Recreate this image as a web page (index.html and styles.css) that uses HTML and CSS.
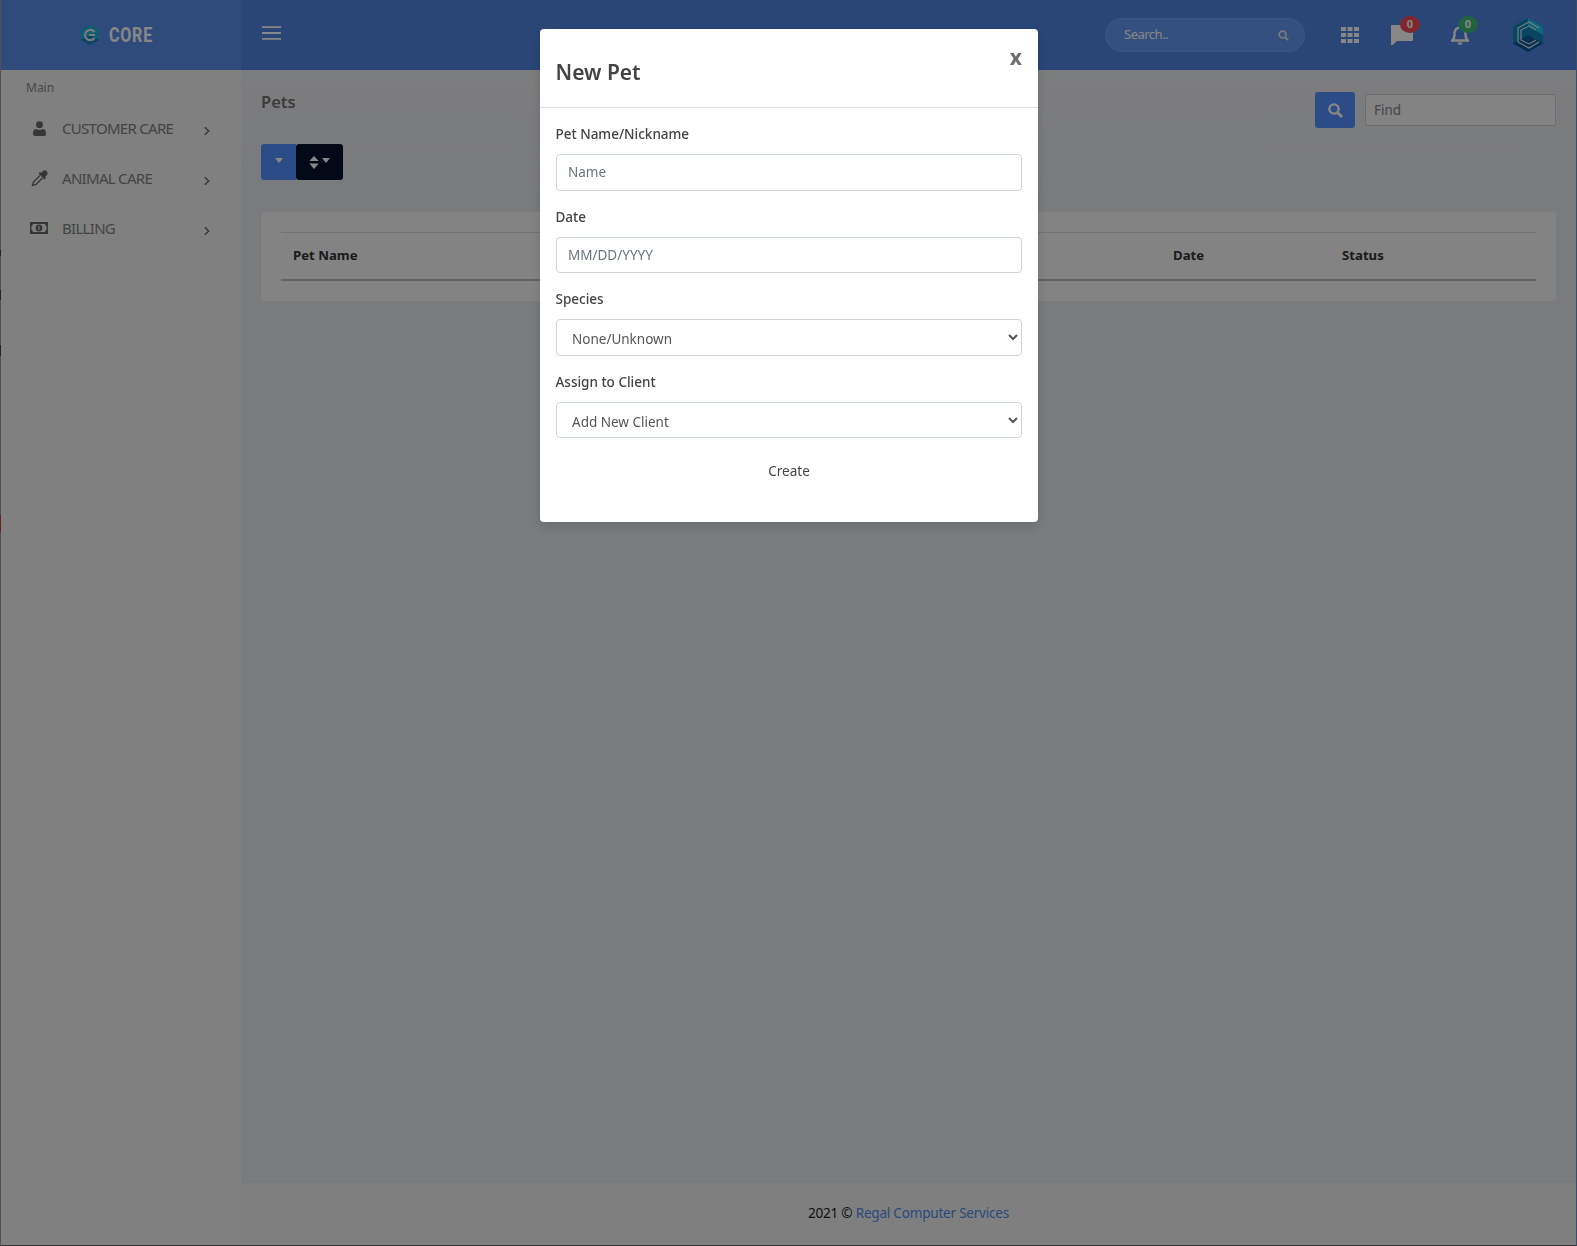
FILE: index.html
```html
<!DOCTYPE html>
<html lang="en">
<head>
  <meta charset="UTF-8" />
  <meta name="viewport" content="width=device-width, initial-scale=1.0" />
  <title>Pets - Core</title>
  <link rel="stylesheet" href="styles.css">
</head>
<body>
  <div class="app">
    <!-- top bar -->
    <header class="topbar">
      <div class="brand">
        <svg class="brand-logo" viewBox="0 0 20 22" width="20" height="22">
          <polygon points="10,1 19,6 19,16 10,21 1,16 1,6" fill="#1fb0d8" />
          <polygon points="10,11 19,16 10,21 1,16" fill="#1a7fb8" />
          <path d="M14.500 8 A5.200 5.200 0 1 0 14.500 14 M9 11 H15" fill="none" stroke="#dfe9f5" stroke-width="2.200" />
        </svg>
        <span class="brand-name">CORE</span>
      </div>
      <div class="topbar-main">
        <svg class="menu-toggle" viewBox="0 0 19 14" width="19" height="14">
          <path d="M0 1.200 H19 M0 7 H19 M0 12.800 H19" stroke="#fff" stroke-width="1.800" />
        </svg>
        <div class="top-search">
          <span class="top-search-text">Search..</span>
          <svg viewBox="0 0 12 12" width="11" height="11">
            <circle cx="5" cy="5" r="3.700" fill="none" stroke="#e6e6e6" stroke-width="1.800" />
            <path d="M8 8 L11 11" stroke="#e6e6e6" stroke-width="2" />
          </svg>
        </div>
        <div class="top-icons">
          <svg class="ico-grid" viewBox="0 0 18 16" width="18" height="16">
            <path fill="#fff" d="M0 0h5v4H0zM6.500 0h5v4h-5zM13 0h5v4h-5zM0 6h5v4H0zM6.500 6h5v4h-5zM13 6h5v4h-5zM0 12h5v4H0zM6.500 12h5v4h-5zM13 12h5v4h-5z" />
          </svg>
          <div class="top-icon msg">
            <svg viewBox="0 0 22 20" width="22" height="20">
              <path fill="#fff" d="M1 0H21a1 1 0 0 1 1 1V15a1 1 0 0 1-1 1H6L1 20.500Q0 20 0 19V1a1 1 0 0 1 1-1z" />
            </svg>
            <span class="badge badge-red">0</span>
          </div>
          <div class="top-icon bell">
            <svg viewBox="0 0 18 20" width="18" height="20">
              <path fill="none" stroke="#fff" stroke-width="2.400" d="M1.200 15.500 C4 13 3.500 10 3.500 8 A5.500 5.500 0 0 1 14.500 8 C14.500 10 14 13 16.800 15.500 Z" />
              <path fill="#fff" d="M6.500 17.500h5a2.500 2.500 0 0 1-5 0z" />
            </svg>
            <span class="badge badge-green">0</span>
          </div>
          <svg class="avatar" viewBox="0 0 32 36" width="32" height="36">
            <polygon points="16,1 31,9.500 31,26.500 16,35 1,26.500 1,9.500" fill="#1187b8" />
            <polygon points="16,1 31,9.500 31,18 16,9" fill="#1bc0e6" />
            <polygon points="16,35 31,26.500 16,18 1,26.500" fill="#0c5a9c" />
            <path d="M27 11 L17 5 L6 11 V25 L17 31 L27 25 M24 13 L17 9 L9 13 V23 L17 27 L24 23" fill="none" stroke="#e6eef6" stroke-width="1.100" />
          </svg>
        </div>
      </div>
    </header>

    <div class="layout">
      <!-- left menu -->
      <nav class="sidebar">
        <div class="side-title">Main</div>
        <a class="side-item">
          <span class="side-icon">
            <svg viewBox="0 0 14 16" width="13" height="15">
              <circle cx="7" cy="4" r="3.700" fill="#666" />
              <path fill="#666" d="M3 8.500 Q7 10.500 11 8.500 Q14 9.500 14 13 V14 Q14 16 12 16 H2 Q0 16 0 14 V13 Q0 9.500 3 8.500z" />
            </svg>
          </span>
          <span class="side-label">CUSTOMER CARE</span>
          <svg class="side-arrow" viewBox="0 0 7 11" width="6" height="10"><path d="M1 1 L5.500 5.500 L1 10" fill="none" stroke="#666" stroke-width="1.600" /></svg>
        </a>
        <a class="side-item">
          <span class="side-icon">
            <svg viewBox="0 0 17 17" width="17" height="17">
              <path fill="#666" d="M10 3 L12 1 Q14 -.5 15.500 1 Q17.500 3 16 5 L14 7 L15 8 L13.500 9.500 L7.500 3.500 L9 2z" />
              <path fill="none" stroke="#666" stroke-width="1.400" d="M9 5.500 L2.500 12 L1.500 15.500 L5 14.500 L11.500 8" />
            </svg>
          </span>
          <span class="side-label">ANIMAL CARE</span>
          <svg class="side-arrow" viewBox="0 0 7 11" width="6" height="10"><path d="M1 1 L5.500 5.500 L1 10" fill="none" stroke="#666" stroke-width="1.600" /></svg>
        </a>
        <a class="side-item">
          <span class="side-icon">
            <svg viewBox="0 0 18 12" width="18" height="12">
              <path fill="#666" fill-rule="evenodd" d="M0 0H18V12H0z M3 2 Q3 4 1.500 4 V8 Q3 8 3 10 H15 Q15 8 16.500 8 V4 Q15 4 15 2z" />
              <circle cx="9" cy="6" r="3.400" fill="#666" />
              <path d="M9 4 V8" stroke="#ddd" stroke-width="1.200" />
            </svg>
          </span>
          <span class="side-label">BILLING</span>
          <svg class="side-arrow" viewBox="0 0 7 11" width="6" height="10"><path d="M1 1 L5.500 5.500 L1 10" fill="none" stroke="#666" stroke-width="1.600" /></svg>
        </a>
      </nav>

      <main class="content">
        <div class="page-body">
          <div class="page-head">
            <div>
              <h1 class="page-title">Pets</h1>
              <div class="tool-group">
                <button class="tool-btn tool-blue"><span class="caret"></span></button>
                <button class="tool-btn tool-dark">
                  <svg viewBox="0 0 10 14" width="10" height="13"><path fill="#fff" d="M5 0 L10 5.500 H0z M5 14 L0 8 H10z" /></svg>
                  <span class="caret"></span>
                </button>
              </div>
            </div>
            <div class="find">
              <button class="find-btn">
                <svg viewBox="0 0 15 15" width="15" height="15">
                  <circle cx="6" cy="6" r="4.600" fill="none" stroke="#fff" stroke-width="2.400" />
                  <path d="M9.500 9.500 L14 14" stroke="#fff" stroke-width="2.800" />
                </svg>
              </button>
              <input class="find-input" type="text" placeholder="Find" />
            </div>
          </div>

          <section class="card">
            <div class="pets-table">
              <span class="col-name">Pet Name</span>
              <span class="col-date">Date</span>
              <span class="col-status">Status</span>
            </div>
          </section>
        </div>

        <footer class="footer">2021 © <a class="footer-link">Regal Computer Services</a></footer>
      </main>
    </div>
  </div>

  <!-- modal -->
  <div class="backdrop">
    <form class="modal">
      <div class="modal-head">
        <h2>New Pet</h2>
        <span class="modal-close">x</span>
      </div>
      <div class="modal-body">
        <label for="pet-name">Pet Name/Nickname</label>
        <input id="pet-name" class="tall" type="text" placeholder="Name" />

        <label for="pet-date">Date</label>
        <input id="pet-date" type="text" placeholder="MM/DD/YYYY" />

        <label for="pet-species">Species</label>
        <select id="pet-species" class="tall">
          <option>None/Unknown</option>
        </select>

        <label for="pet-client">Assign to Client</label>
        <select id="pet-client">
          <option>Add New Client</option>
        </select>

        <button type="button" class="create-btn">Create</button>
      </div>
    </form>
  </div>
</body>
</html>
```

FILE: styles.css
```css
html, body {
  height: 100%;
}

body {
  margin: 0;
  font-family: "Noto Sans", "Open Sans", sans-serif;
  font-size: 14px;
  color: #333;
  /* the 1px edge of the window behind, on the left */
  background: linear-gradient(#999 0, #999 250px, #444 250px, #444 256px, #999 256px, #999 290px, #444 290px, #444 300px, #999 300px, #999 345px, #444 345px, #444 356px, #999 356px, #999 515px, #b8483e 515px, #b8483e 532px, #999 532px);
  overflow: hidden;
}

.app {
  height: 100vh;
  box-sizing: border-box;
  margin-left: 1px;
  display: flex;
  flex-direction: column;
  border-right: 1px solid #6f90c8;
  border-bottom: 1px solid #666;
}

/* top bar */
.topbar {
  height: 70px;
  flex: none;
  display: flex;
  background-color: #4f84e1;
}

.brand {
  width: 240px;
  flex: none;
  display: flex;
  align-items: center;
  justify-content: center;
  gap: 9px;
  padding: 0 10px 1px 0;
  box-sizing: border-box;
  background-color: #598eea;
}

.brand-name {
  font-family: "Roboto", sans-serif;
  font-weight: 700;
  font-size: 20px;
  letter-spacing: 1px;
  color: #fff;
  transform: scaleX(.8);
  transform-origin: left center;
  width: 44px;
}

.topbar-main {
  flex: 1;
  display: flex;
  align-items: center;
  padding-left: 21px;
}

.menu-toggle {
  margin-top: -4px;
}

.top-search {
  margin-left: auto;
  width: 200px;
  height: 34px;
  box-sizing: border-box;
  display: flex;
  align-items: center;
  justify-content: space-between;
  padding: 0 15px 2px 18px;
  background-color: #6097f0;
  border: 1px solid #6ea3f8;
  border-radius: 17px;
}

.top-search svg {
  margin-top: 2px;
}

.top-search-text {
  color: #fff;
  font-size: 13px;
  letter-spacing: -.5px;
}

.top-icons {
  display: flex;
  align-items: center;
  margin-left: 36px;
  margin-right: 32px;
}

.top-icon {
  position: relative;
  display: flex;
}

.msg {
  margin-left: 32px;
}

.bell {
  margin-left: 38px;
}

.avatar {
  margin-left: 43px;
}

.badge {
  position: absolute;
  top: -9px;
  width: 20px;
  height: 17px;
  border-radius: 50%;
  font-size: 11px;
  font-weight: 700;
  line-height: 16px;
  text-align: center;
  color: #fff;
}

.badge-red {
  background-color: #f04a55;
  left: 9px;
}

.badge-green {
  background-color: #3dbb76;
  left: 7px;
}

.layout {
  flex: 1;
  display: flex;
  min-height: 0;
}

/* left menu */
.sidebar {
  width: 240px;
  flex: none;
  background-color: #f1f1f1;
}

.side-title {
  padding: 9px 0 7px 25px;
  font-size: 12px;
  line-height: 17px;
  color: #888;
}

.side-item {
  display: flex;
  align-items: center;
  height: 50px;
}

.side-icon {
  width: 18px;
  margin-left: 29px;
  display: flex;
  justify-content: center;
}

.side-label {
  margin-left: 14px;
  width: 142px;
  font-size: 15px;
  letter-spacing: -.7px;
  color: #808080;
}

.side-arrow {
  margin-top: 5px;
}

/* page */
.content {
  flex: 1;
  display: flex;
  flex-direction: column;
  min-width: 0;
}

.page-body {
  flex: 1;
  padding: 0 20px;
  background: linear-gradient(#ebecee, #e6e8ec 130px);
}

.page-head {
  display: flex;
  justify-content: space-between;
  align-items: flex-start;
}

.page-title {
  margin: 19px 0 0;
  font-size: 16.500px;
  font-weight: 600;
  line-height: 26px;
  color: #707070;
}

.tool-group {
  display: flex;
  margin-top: 29px;
}

.tool-btn {
  height: 36px;
  border: none;
  padding: 0;
  display: flex;
  align-items: center;
  justify-content: center;
  gap: 3px;
  border-radius: 3px;
}

.tool-blue {
  width: 35px;
  background-color: #5190ff;
  border-radius: 3px 0 0 3px;
}

.tool-dark {
  width: 47px;
  background-color: #07112a;
}

.caret {
  display: block;
  margin-top: -3px;
  border-top: 5px solid #fff;
  border-left: 4.500px solid transparent;
  border-right: 4.500px solid transparent;
}

.find {
  display: flex;
  align-items: center;
  gap: 10px;
  margin-top: 22px;
}

.find-btn {
  width: 40px;
  height: 36px;
  padding: 0;
  display: flex;
  align-items: center;
  justify-content: center;
  border: none;
  border-radius: 3px;
  background-color: #5190ff;
}

.find-input {
  width: 191px;
  height: 32px;
  box-sizing: border-box;
  padding: 0 8px;
  font: inherit;
  font-size: 13.500px;
  border: 1px solid #ccc;
  border-radius: 2px;
  background-color: #f7f7f7;
}

.find-input::placeholder {
  color: #808488;
}

.card {
  margin-top: 32px;
  height: 89px;
  box-sizing: border-box;
  padding: 20px 20px 0;
  background-color: #f8f8f8;
  border-radius: 4px;
}

.pets-table {
  height: 49px;
  box-sizing: border-box;
  display: flex;
  align-items: center;
  padding-bottom: 2px;
  border-top: 1px solid #d8d8d8;
  border-bottom: 2px solid #bbb;
  font-weight: 700;
  font-size: 13.200px;
  color: #333;
}

.col-name {
  width: 880px;
  margin-left: 12px;
}

.col-date {
  width: 169px;
}

/* footer */
.footer {
  height: 63px;
  box-sizing: border-box;
  flex: none;
  padding-top: 20px;
  text-align: center;
  background-color: #f0f0f0;
  border-top: 1px solid #e2e2e2;
  font-size: 13.600px;
  line-height: 20px;
  letter-spacing: -.25px;
  color: #222;
}

.footer-link {
  color: #508ce6;
}

/* modal */
.backdrop {
  position: fixed;
  top: 0;
  left: 0;
  width: 100%;
  height: 100%;
  box-sizing: border-box;
  padding: 29px 0 0 1px;
  display: flex;
  justify-content: center;
  align-items: flex-start;
  background-color: rgba(0,0,0,0.47);
}

.modal {
  width: 498px;
  height: 493px;
  box-sizing: border-box;
  background: white;
  border-radius: 4px;
  box-shadow: 0 4px 12px rgba(0,0,0,0.15);
}

.modal-head {
  height: 79px;
  box-sizing: border-box;
  padding: 0 16px 0 15.500px;
  display: flex;
  justify-content: space-between;
  border-bottom: 1px solid #dee2e6;
}

.modal-head h2 {
  margin: 28px 0 0;
  font-size: 21px;
  font-weight: 600;
  line-height: 30px;
  color: #444;
}

.modal-close {
  margin-top: 16px;
  font-size: 21px;
  font-weight: 700;
  line-height: 24px;
  color: #6e6e6e;
}

.modal-body {
  padding: 16px 16px 0;
  display: flex;
  flex-direction: column;
}

.modal-body label {
  margin-left: -.5px;
  margin-bottom: 10px;
  font-size: 13.500px;
  font-weight: 500;
  line-height: 20px;
  color: #444;
}

.modal-body input,
.modal-body select {
  height: 36px;
  box-sizing: border-box;
  margin-bottom: 16px;
  padding: 0 11px;
  font: inherit;
  font-size: 13.500px;
  color: #555;
  background-color: #fff;
  border: 1px solid #ced4da;
  border-radius: 4px;
}

.modal-body input {
  padding-bottom: 1px;
}

.modal-body select {
  padding-top: 4px;
}

.modal-body select.tall {
  padding-top: 2px;
}

.modal-body .tall {
  height: 37px;
}

.modal-body input::placeholder {
  color: #6c757d;
}

.create-btn {
  align-self: center;
  margin-top: 2px;
  border: none;
  background: none;
  padding: 6px 12px;
  font: inherit;
  font-size: 13.500px;
  color: #444;
}
```
